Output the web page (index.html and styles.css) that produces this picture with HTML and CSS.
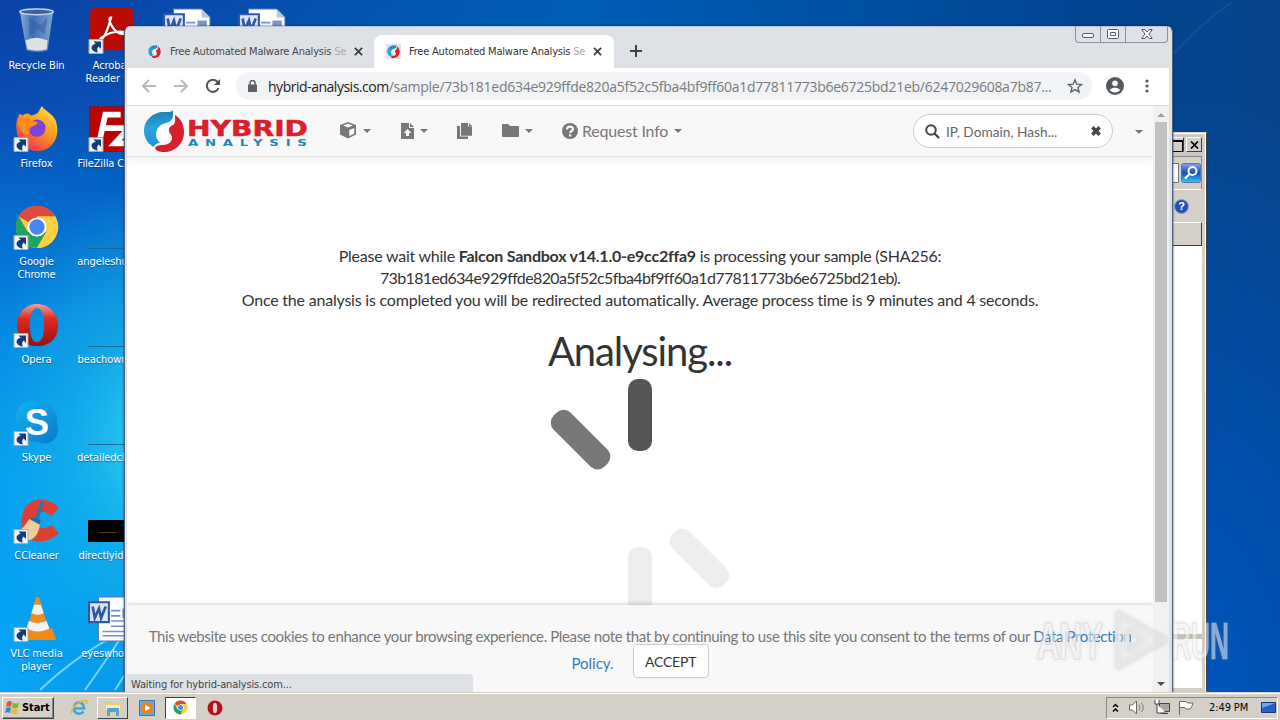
FILE: index.html
```
<!DOCTYPE html>
<html>
<head>
<meta charset="utf-8">
<title>Desktop</title>
<link rel="stylesheet" href="styles.css">
</head>
<body>

<!-- shared icons -->
<svg width="0" height="0" class="defs">
<defs>
<linearGradient id="gFire" x1="1" y1="0" x2="0.3" y2="1"><stop offset="0" stop-color="#fff04a"/><stop offset=".5" stop-color="#ff9a1f"/><stop offset="1" stop-color="#f0305a"/></linearGradient>
<linearGradient id="gOpera" x1="0" y1="0" x2="0" y2="1"><stop offset="0" stop-color="#f4a09a"/><stop offset=".35" stop-color="#e02a20"/><stop offset="1" stop-color="#98100c"/></linearGradient>
<linearGradient id="gSkype" x1="0" y1="0" x2="1" y2="1"><stop offset="0" stop-color="#12b4ea"/><stop offset="1" stop-color="#0a78d0"/></linearGradient>
<linearGradient id="gBin" x1="0" y1="0" x2="1" y2="0"><stop offset="0" stop-color="#a8c4e4"/><stop offset=".4" stop-color="#4a78b8"/><stop offset="1" stop-color="#9cbce0"/></linearGradient>
<linearGradient id="gBlue" x1="0" y1="0" x2="0" y2="1"><stop offset="0" stop-color="#1c7cb0"/><stop offset=".5" stop-color="#28a8e0"/><stop offset="1" stop-color="#1c90cc"/></linearGradient>
<linearGradient id="gFind" x1="0" y1="0" x2="0" y2="1"><stop offset="0" stop-color="#8ba4ee"/><stop offset=".5" stop-color="#1c48c8"/><stop offset="1" stop-color="#30d0e8"/></linearGradient>
</defs>
<symbol id="arrow" viewBox="0 0 15 15"><path fill="#f2f4f6" stroke="#a9a9a9" d="M.5.5h14v14H.5z"/><path fill="#143c7c" d="M5 2.500h7.500V10l-2.300-2.400C8.500 9 8.200 11 9.200 13.500 5 13 1.800 10 3.500 7c.8-1.300 2.200-1.900 3.700-2.300z"/></symbol>
<symbol id="chrome" viewBox="0 0 48 48"><circle cx="24" cy="24" r="22" fill="#fdd044"/><path fill="#de4a3e" d="M24 24 4.900 13A22 22 0 0 1 43.100 13H24z"/><path fill="#22a160" d="M4.900 13A22 22 0 0 0 24 46l10-17-10-5-9.500 5.500z"/><path fill="#fdd044" d="M43.100 13H24l9.500 16.500L24 46A22 22 0 0 0 43.100 13z"/><circle cx="24" cy="24" r="10" fill="#fff"/><circle cx="24" cy="24" r="8" fill="#4a86f0"/></symbol>
<symbol id="opera" viewBox="0 0 48 48"><path fill="url(#gOpera)" fill-rule="evenodd" d="M24 2c12 0 22 9 22 22.500S37 46 24 46 3 37 3 24.500 12 2 24 2zm0 4.500c-5 0-7.500 7-7.500 17.500S19 42 24 42s7.500-7.500 7.500-18S29 6.500 24 6.500z"/></symbol>
<symbol id="swirl" viewBox="0 0 40 42"><path fill="url(#gBlue)" d="M29 0c-1 2-4 2-9 2C9 2 0 10 0 21c0 7 4 13 10 16 0-2 3-4 6-4-3-3-4-6-4-8 0-6 4-11 10-12 4-1 7-4 7-7z"/><path fill="#d8202c" d="M31 5c6 4 9 9 9 17 0 12-9 20-20 20-4 0-8-1-9-4 2-3 5-3 8-3 6 0 9-4 9-7 0-4-3-4-3-8 0-3 2-4 4-5 3-2 2-6 2-10z"/><path fill="#fff" d="M13 23q0-8 8-9 4 0 3 4-2 3 1 7 1 5-6 5l-2-2 1-4-4 1z"/></symbol>
<symbol id="word" viewBox="0 0 46 44"><path fill="#fff" stroke="#5878b8" d="M10 1h27l8 8v34H10z"/><path fill="#b8c8e8" d="M37 1v8h8z"/><path stroke="#7890d0" stroke-width="1.500" d="M22 14h9M22 19h9M22 24h20M22 29h20M14 34h28M14 38h28"/><path fill="#7c94c8" d="M33 12h9v9h-9z"/><path fill="#dce6f8" stroke="#3058a8" stroke-width="2" d="M1 6h19v19H1z"/><path fill="none" stroke="#3058a8" stroke-width="2.600" d="M4.500 10l2 11 4-9 2 9 4.500-11"/></symbol>
</svg>

<div class="desktop">

<svg class="rays" viewBox="0 0 130 100"><path d="M40 98Q80 60 130 36M85 98Q105 70 122 44M115 98Q122 86 130 76"/></svg>
<svg class="streak" viewBox="0 0 60 60"><path d="M2 52Q30 20 60 0"/></svg>

<div class="icons">
	<div class="icon"><svg viewBox="0 0 48 48"><path fill="url(#gBin)" fill-opacity=".8" d="M6 3h35l-6 41q-11 4-22 0z"/><path fill="#dfe0e2" d="M12 34q11-6 23 0l-1 9q-10 3-20 0z"/><path fill="#2c5ca4" d="M16 10l12 8 7-9-3 18-8-5-8 9z" opacity=".5"/><ellipse cx="23.500" cy="4" rx="17.500" ry="3" fill="#38639c" stroke="#c8d4e4" stroke-width="1.500"/></svg><span>Recycle Bin</span></div>
	<div class="icon"><svg viewBox="0 0 48 48"><path fill="url(#gFire)" d="M3 14l3-6 3 2c3-3 6-3 9 0 3-1 6-2 7-3l4-7c3 5 10 7 14 14 6 14 0 32-18 33C8 47 0 30 3 14z"/><circle cx="24" cy="23" r="9" fill="#7c45d8"/><path fill="#ff8d1e" d="M4 17c4-6 10-5 13-2l8 2c-2 4-6 3-8 6-2 4 0 6-3 7-6-1-9-7-10-13z"/></svg><svg class="short"><use href="#arrow"/></svg><span>Firefox</span></div>
	<div class="icon"><svg><use href="#chrome"/></svg><svg class="short"><use href="#arrow"/></svg><span>Google<br>Chrome</span></div>
	<div class="icon"><svg><use href="#opera"/></svg><svg class="short"><use href="#arrow"/></svg><span>Opera</span></div>
	<div class="icon"><svg viewBox="0 0 48 48"><path fill="url(#gSkype)" d="M14 2c5-2 8 1 12 1 13 0 20 9 19 21 2 8 1 16-7 20-6 3-10 0-14 0C10 44 3 36 3 24 0 14 5 4 14 2z"/><text class="skype" x="24" y="37" text-anchor="middle">S</text></svg><svg class="short"><use href="#arrow"/></svg><span>Skype</span></div>
	<div class="icon"><svg viewBox="0 0 48 48"><path fill="#dc4032" d="M47 10C32-5 8 0 8 24s22 27 39 13l-8-9c-8 7-17 3-17-5s9-12 17-4z"/><path fill="#2874b8" d="M28 3l3 2-6 20-4-1z"/><path fill="#1c6cb0" d="M19 20l9 3-2 6-10-5z"/><path fill="#f4cc98" d="M16 22l11 6c-1 8-5 15-11 16L2 36c7-3 10-8 14-14z"/></svg><svg class="short"><use href="#arrow"/></svg><span>CCleaner</span></div>
	<div class="icon"><svg viewBox="0 0 48 48"><path fill="#f08a14" d="M10 34h30l4 12H5z"/><path fill="#f68b1c" d="M23 1h3l11 36q-12 6-24 0z"/><path fill="#f2f2f2" d="M21 9h7l3 9q-6 3-13 0zM15.500 26q9 4 18.500 0l3 8q-12 6-24 0z"/></svg><svg class="short"><use href="#arrow"/></svg><span>VLC media<br>player</span></div>

	<div class="icon"><svg viewBox="0 0 48 48"><rect x="1" width="46" height="44" rx="5" fill="#b80c04"/><path fill="none" stroke="#fff" stroke-width="2.300" d="M23 10c-5 0 3 18 13 17 7-2-9-6-23 4-6 5 3 7 10-21z"/></svg><svg class="short"><use href="#arrow"/></svg><span>Acrobat<br>Reader DC</span></div>
	<div class="icon"><svg viewBox="0 0 48 48"><path fill="#b80404" stroke="#8c0808" stroke-dasharray="2 2" d="M.5.5h47v47H.5z"/><path fill="none" stroke="#fff" stroke-width="6" d="M33 9H17l-7 32M14 23h15M28 23h14L27 39h15"/></svg><svg class="short"><use href="#arrow"/></svg><span>FileZilla Client</span></div>
	<div class="icon"><i class="line"></i><span>angeleshust...</span></div>
	<div class="icon"><i class="line"></i><span>beachowner...</span></div>
	<div class="icon"><i class="line"></i><span>detailedclub...</span></div>
	<div class="icon"><i class="thumb"></i><span>directlyidea...</span></div>
	<div class="icon"><svg><use href="#word"/></svg><span>eyeswhole...</span></div>

	<div class="icon last"><svg><use href="#word"/></svg></div>
	<div class="icon"><svg><use href="#word"/></svg></div>
</div>

<!-- explorer window in the back -->
<div class="explorer">
	<div class="ex-title"><b class="max"></b><b class="cls"><svg viewBox="0 0 9 8"><path d="M1 .5l7 7M8 .5l-7 7"/></svg></b></div>
	<div class="ex-addr"><i></i><svg viewBox="0 0 20 20"><rect x=".5" y=".5" width="19" height="19" rx="2" fill="url(#gFind)" stroke="#5474b8"/><circle cx="11.500" cy="8" r="4" fill="none" stroke="#fff" stroke-width="2"/><path stroke="#fff" stroke-width="2.400" d="M8.500 11L4 15.500"/></svg></div>
	<div class="ex-tools"><em>?</em></div>
	<div class="ex-head"></div>
	<div class="ex-list"></div>
</div>

<!-- browser -->
<div class="browser">
	<div class="tabs">
		<div class="tab">
			<svg class="fav" viewBox="0 0 15 15"><use href="#swirl" x="1" y="1" width="13" height="13"/></svg>
			<p>Free Automated Malware Analysis <span>Se</span></p>
			<svg class="x" viewBox="0 0 10 10"><path d="M1 1l8 8M9 1l-8 8"/></svg>
		</div>
		<div class="tab on">
			<svg class="fav" viewBox="0 0 15 15"><use href="#swirl" x="1" y="1" width="13" height="13"/></svg>
			<p>Free Automated Malware Analysis <span>Se</span></p>
			<svg class="x" viewBox="0 0 10 10"><path d="M1 1l8 8M9 1l-8 8"/></svg>
		</div>
		<svg class="plus" viewBox="0 0 12 12"><path d="M6 0v12M0 6h12"/></svg>
		<div class="winbtns">
			<b><svg viewBox="0 0 12 6"><rect x=".5" y=".5" width="11" height="4" rx="1.500"/></svg></b>
			<b><svg viewBox="0 0 12 10"><rect x=".5" y=".5" width="11" height="9" rx="1"/><path d="M3.500 3.500h5v3h-5z"/></svg></b>
			<b><svg viewBox="0 0 12 10"><path d="M.8.500h3L6 3 8.200.500h3L8 5l3.200 4.500h-3L6 7 3.800 9.500h-3L4 5z"/></svg></b>
		</div>
	</div>

	<div class="toolbar">
		<svg class="nav off" viewBox="0 0 14 14"><path d="M14 7H1M7 1L1 7l6 6"/></svg>
		<svg class="nav off" viewBox="0 0 14 14"><path d="M0 7h13M7 1l6 6-6 6"/></svg>
		<svg class="nav" viewBox="0 0 14 14"><path d="M12.500 9A6 6 0 1 1 11.500 3L13 5"/><path class="fill" d="M14 0v6H8z"/></svg>
		<div class="omni">
			<svg class="lock" viewBox="0 0 9 12"><path fill="#5f6368" d="M0 4.500h9V12H0z"/><path fill="none" stroke="#5f6368" stroke-width="1.500" d="M2 5V3a2.500 2.500 0 0 1 5 0v2"/></svg>
			<p><b>hybrid-analysis.com</b><span>/sample/73b181ed634e929ffde820a5f52c5fba4bf9ff60a1d77811773b6e6725bd21eb/6247029608a7b87...</span></p>
			<svg class="star" viewBox="0 0 16 16"><path d="M8 1.800l1.800 4.400 4.700.3-3.600 3 1.200 4.600L8 11.600l-4.100 2.500 1.200-4.600-3.600-3 4.700-.3z"/></svg>
		</div>
		<svg class="user" viewBox="0 0 18 18"><circle cx="9" cy="9" r="9" fill="#54585d"/><circle cx="9" cy="6.300" r="2.800" fill="#fff"/><path fill="#fff" d="M3.500 13q5.500-5 11 0-5.500 5-11 0z"/></svg>
		<svg class="dots" viewBox="0 0 4 14"><circle cx="2" cy="2" r="1.600"/><circle cx="2" cy="7" r="1.600"/><circle cx="2" cy="12" r="1.600"/></svg>
	</div>

	<div class="view">
	<div class="page">
		<div class="navbar">
			<svg class="logo" viewBox="0 0 166 44">
				<use href="#swirl" width="40" height="42" x="0" y="1"/>
				<text class="hy" x="43" y="27" textLength="121" lengthAdjust="spacingAndGlyphs">HYBRID</text>
				<text class="an" x="31.400" y="37.500" textLength="85" lengthAdjust="spacing" transform="scale(1.4 1)">ANALYSIS</text>
			</svg>
			<div class="item box"><svg width="18" height="17" viewBox="0 0 18 17"><path d="M9 0l8 3v9.500l-8 4-8-4V3z"/><path fill="#f8f8f8" d="M9 1.800l5 1.800-5 1.900-5-1.900zM10.300 8l5-2v5.600l-5 2.700z"/></svg><i class="caret"></i></div>
			<div class="item up"><svg width="13" height="16" viewBox="0 0 13 16"><path d="M0 0h8v5h5v11H0z"/><path d="M9 0l4 4H9z"/><path fill="#f8f8f8" d="M6.500 6l4 4H8v3H5v-3H2.500z"/></svg><i class="caret"></i></div>
			<div class="item copy"><svg width="15" height="16" viewBox="0 0 15 16"><path d="M4 0h7v4h4v12H4z" transform="scale(1 .8)"/><path d="M12 0l3 3h-3zM0 3h3v10.500h8V16H0z"/></svg></div>
			<div class="item dir"><svg width="17" height="13" viewBox="0 0 17 13"><path d="M0 1q0-1 1-1h5l2 2h8q1 0 1 1v9q0 1-1 1H1q-1 0-1-1z"/></svg><i class="caret"></i></div>
			<div class="item req"><svg width="16" height="16" viewBox="0 0 16 16"><circle cx="8" cy="8" r="8"/><path fill="none" stroke="#f8f8f8" stroke-width="2.200" d="M5 6.500C5 2.500 11 2.800 11 6c0 2-2.800 2-2.800 4"/><path fill="#f8f8f8" d="M7 11.300h2.300v2.200H7z"/></svg><span>Request Info</span><i class="caret"></i></div>
			<div class="search">
				<svg width="15" height="15" viewBox="0 0 15 15"><circle cx="6" cy="6" r="4.800" fill="none" stroke="#444" stroke-width="2"/><path stroke="#444" stroke-width="2.400" d="M9.500 9.500l4.500 4.500"/></svg>
				<span>IP, Domain, Hash...</span>
				<svg width="10" height="10" viewBox="0 0 10 10"><path stroke="#444" stroke-width="3.400" d="M1.300 1.300l7.400 7.400M8.700 1.300L1.300 8.700"/></svg>
			</div>
			<i class="caret end"></i>
		</div>

		<div class="msg">
			<p class="l1">Please wait while <b>Falcon Sandbox v14.1.0-e9cc2ffa9</b> is processing your sample (SHA256:</p>
			<p class="l2">73b181ed634e929ffde820a5f52c5fba4bf9ff60a1d77811773b6e6725bd21eb).</p>
			<p class="l3">Once the analysis is completed you will be redirected automatically. Average process time is 9 minutes and 4 seconds.</p>
			<h1>Analysing...</h1>
			<svg class="spinner" width="240" height="240" viewBox="-120 -120 240 240">
				<rect x="-12" y="-120" width="24" height="72" rx="10" fill="#555"/>
				<rect x="-12" y="-120" width="24" height="72" rx="10" fill="#777" transform="rotate(-45)"/>
				<rect x="-12" y="-120" width="24" height="72" rx="10" fill="#ededed" transform="rotate(135)"/>
				<rect x="-12" y="-120" width="24" height="72" rx="10" fill="#ededed" transform="rotate(180)"/>
			</svg>
		</div>

		<div class="cookie">
			<p class="c1">This website uses cookies to enhance your browsing experience. Please note that by continuing to use this site you consent to the terms of our <a>Data Protection</a></p>
			<p><a>Policy.</a><button>ACCEPT</button></p>
		</div>
		<div class="status"><span>Waiting for hybrid-analysis.com...</span></div>
	</div>
	<div class="scroll"><i class="su"></i><i class="bar"></i><i class="sd"></i></div>
	</div>
</div>

<div class="mark">
	<svg viewBox="0 0 200 70">
		<text x="3" y="54" textLength="66" lengthAdjust="spacingAndGlyphs">ANY</text>
		<path d="M84 8l46 27-46 27zM93 24v22l18-11z"/>
		<text x="138" y="54" textLength="57" lengthAdjust="spacingAndGlyphs">RUN</text>
	</svg>
</div>

<div class="taskbar">
	<div class="start"><svg width="15" height="15" viewBox="0 0 15 15"><path fill="#e4572a" d="M2 2q3-2 5 0L6 7Q3 5.500 1 7z"/><path fill="#7db83c" d="M8 2.500q3 2 6 0l-1 5q-3 1.500-6 0z"/><path fill="#3c84d8" d="M1 8q3-1.500 5 0l-1 5q-3-1.500-5 0z"/><path fill="#f8b820" d="M7 8.500q3 1.500 6 0l-1 5q-3 1.500-6 0z"/></svg>Start</div>
	<div class="tb ie"><svg width="18" height="18" viewBox="0 0 18 18"><path fill="none" stroke="#3ca4e0" stroke-width="2.600" d="M4 9.500h10C14 1.500 4 1.500 4 9.500c0 6 7 6.500 9.500 3"/><path fill="none" stroke="#e8b83c" stroke-width="1.500" d="M2 15C-1 13 6 3 15 1.500c3 0 2 2 1 3"/></svg></div>
	<div class="tb up"><svg width="18" height="16" viewBox="0 0 18 16"><path fill="#e8cc78" d="M1 2q0-1 1-1h4l1 2h9q1 0 1 1v9H1z"/><path fill="#f8ecb0" d="M2 5h14v6H2z"/><path fill="#4ca4dc" d="M3 9q0-1 1-1h10q1 0 1 1v7h-3v-4H6v4H3z"/></svg></div>
	<div class="tb"><svg width="16" height="16" viewBox="0 0 16 16"><path fill="#68a8d8" stroke="#3878b0" d="M.5.500h15v15H.500z"/><circle cx="8" cy="8" r="6" fill="#f08018"/><path fill="#fff" d="M6 4.500l5.500 3.500L6 11.500z"/></svg></div>
	<div class="tb down"><svg width="15" height="15"><use href="#chrome"/></svg></div>
	<div class="tb"><svg width="16" height="16" viewBox="0 0 16 16"><circle cx="8" cy="8" r="7.500" fill="#b81018"/><ellipse cx="8" cy="8" rx="2.200" ry="5.300" fill="#e8d0d0"/></svg></div>
	<div class="tray">
		<svg width="7" height="10" viewBox="0 0 7 10"><path fill="none" stroke="#000" stroke-width="1.500" d="M1 4l2.500-2.500L6 4M1 8.500L3.500 6 6 8.500"/></svg>
		<svg width="17" height="15" viewBox="0 0 17 15"><path fill="#fff" stroke="#666" d="M.5 5h3l4-4v13l-4-4h-3z"/><path fill="none" stroke="#777" d="M10 4.500q2 3 0 6M12.500 3q3.500 4.500 0 9"/></svg>
		<svg width="16" height="15" viewBox="0 0 16 15"><path fill="#aaa" stroke="#444" d="M5.500 3.500h10v8h-10z"/><path fill="#fff" stroke="#444" d="M1 0v4h4V0M3 4v9h9M7 13.500h7"/></svg>
		<svg width="17" height="14" viewBox="0 0 17 14"><path fill="#fff" stroke="#666" d="M1.500 14V.500h6q1 2 7.500 1.500-1 4-3 6H8L7 6.500H1.500"/></svg>
		<span>2:49 PM</span>
		<svg width="15" height="12" viewBox="0 0 15 12"><path fill="#2c60c0" stroke="#14367c" d="M.5.500h14v10H.500z"/><path fill="#74a8ec" d="M1 1h13L1 6z"/><path stroke="#cdd" d="M1 11.500h13"/></svg>
	</div>
</div>

</div>
</body>
</html>
```
FILE: styles.css
```
*{box-sizing:border-box;}
body{margin:0;overflow:hidden;font-family:"DejaVu Sans Condensed","DejaVu Sans",sans-serif;font-size:11px;}
p,h1{margin:0;}
svg{display:block;flex:none;}
.defs{position:absolute;}

.desktop{position:relative;width:1280px;height:720px;overflow:hidden;display:flex;flex-direction:column;justify-content:flex-end;
background:
radial-gradient(ellipse 300px 620px at 1190px 720px,rgba(0,86,190,1),rgba(0,80,178,.8) 45%,rgba(0,70,150,0)),
radial-gradient(ellipse 200px 260px at 170px 440px,rgba(50,215,245,.95),rgba(30,195,240,.5) 50%,rgba(20,170,240,0)),
linear-gradient(90deg,rgba(0,96,184,0) 0,rgba(0,96,184,.9) 45%,rgba(0,68,144,1) 85%,#064488 100%),
linear-gradient(180deg,#0a42a6 0,#0a4cb2 100px,#0468cc 200px,#0484e0 320px,#039cf0 480px,#08a8f8 720px);}
.rays{position:absolute;left:0;top:592px;width:130px;height:100px;}
.rays path{fill:none;stroke:#9be6ff;stroke-width:2;opacity:.75;}
.streak{position:absolute;left:1172px;top:2px;width:60px;height:60px;}
.streak path{fill:none;stroke:#3c74ac;stroke-width:2;opacity:.25;}

/* desktop icons, 7 in a column */
.icons{position:absolute;left:-1px;top:8px;display:grid;grid-template-rows:repeat(7,98px);grid-auto-columns:75px;grid-auto-flow:column;}
.icon{position:relative;display:flex;flex-direction:column;align-items:center;color:#fff;text-align:center;line-height:13px;white-space:nowrap;}
.icon>svg{width:48px;height:46px;margin-bottom:5px;}
.icon>.short{position:absolute;left:14px;top:31px;width:16px;height:15px;margin:0;}
.icon span{text-shadow:0 1px 1px rgba(0,30,80,.5);letter-spacing:-.1px;}
.icon .line{width:48px;height:41px;border-bottom:1px solid #176a98;margin-bottom:6px;margin-top:4px;}
.icon .thumb{width:48px;height:22px;background:#000;margin:22px 0 7px;}
.icon .thumb:after{content:"";display:block;width:17px;height:1px;margin:12px 0 0 11px;background:#54400c;}
.icon.last{grid-row:1;grid-column:3;}
.last+.icon{grid-row:1;grid-column:4;}
.skype{font:bold 38px "Liberation Sans",sans-serif;fill:#fff;}

.explorer{position:absolute;left:1000px;top:132px;width:207px;height:560px;background:#d4d0c8;border:1px solid #d4d0c8;border-right-color:#404040;box-shadow:inset -1px 1px #fff;padding:2px 4px 3px 0;display:flex;flex-direction:column;}
.ex-title{display:flex;justify-content:flex-end;height:21px;padding:2px 0;background:#c8c8c8;}
.ex-title b{width:16px;height:15px;margin-left:2px;background:#d4d0c8;border:1px solid;border-color:#fff #404040 #404040 #fff;}
.ex-title .max:before{content:"";display:block;width:10px;height:9px;margin:2px;border:1px solid #000;border-top-width:2px;}
.ex-title svg{width:9px;height:8px;margin:3px;stroke:#000;stroke-width:1.700;}
.ex-addr{display:flex;align-items:center;justify-content:flex-end;gap:2px;height:34px;border:1px solid #888;border-bottom-color:#fff;}
.ex-addr i{width:60px;height:20px;background:#fff;border:1px solid #777;}
.ex-addr svg{width:20px;height:20px;}
.ex-tools{height:32px;padding:9px 13px;text-align:right;}
.ex-tools em{display:inline-block;width:15px;height:15px;border-radius:8px;background:#2450b0;border:1px solid #8ca4d8;color:#fff;font:bold 11px/13px "Liberation Sans",sans-serif;text-align:center;}
.ex-head{height:24px;border:1px solid #fff;border-right-color:#404040;border-bottom-color:#404040;}
.ex-list{flex:1;background:linear-gradient(#fff 388px,#c8c5bc 388px,#c8c5bc 393px,#fff 393px);}

.browser{position:absolute;left:124px;top:26px;width:1049px;height:666px;background:#dee1e6;border:1px solid #50647c;border-top-color:#b8c4d4;border-bottom:0;border-radius:6px 6px 0 0;padding:0 3px 0 2px;display:flex;flex-direction:column;box-shadow:0 0 2px #123;}
.tabs{position:relative;display:flex;height:41px;padding:8px 0 0 8px;}
.tab{display:flex;align-items:center;width:239px;height:33px;padding:0 11px 0 12px;color:#45494d;}
.tab.on{width:240px;padding-right:12px;background:#fff;border-radius:8px 8px 0 0;color:#333;}
.fav{width:15px;height:15px;margin-right:8px;background:#e2e0ea;}
.tab p{flex:1;white-space:nowrap;overflow:hidden;letter-spacing:-.2px;}
.tab p span{color:#aaa;}
.tab .x{width:9px;height:9px;margin-left:8px;stroke:#3c4043;stroke-width:2;}
.plus{width:12px;height:12px;margin:10px 0 0 16px;stroke:#3c4043;stroke-width:2;}
.winbtns{position:absolute;right:1px;top:-1px;display:flex;border:1px solid #8a929c;border-top:0;border-radius:0 0 4px 4px;}
.winbtns b{width:25px;height:16px;display:flex;align-items:center;justify-content:center;border-right:1px solid #8a929c;}
.winbtns b:last-child{width:41px;border:0;}
.winbtns svg{width:12px;height:10px;fill:#fff;stroke:#555b66;}
.winbtns b:first-child svg{height:6px;margin-top:4px;}

.toolbar{display:flex;align-items:center;height:38px;background:#fff;border-bottom:1px solid #d8dadd;padding:0 15px 1px;}
.nav{width:14px;height:14px;margin-right:18px;fill:none;stroke:#505458;stroke-width:2;}
.nav.off{stroke:#b8babd;}
.nav .fill{fill:#505458;stroke:none;}
.omni{display:flex;align-items:center;width:856px;height:28px;margin-left:-2px;border-radius:14px;background:#f1f3f4;padding:0 9px 0 12px;}
.lock{width:9px;height:12px;margin-right:11px;}
.omni p{flex:1;white-space:nowrap;font:14px "Open Sans","Noto Sans",sans-serif;color:#777b80;}
.omni b{font-weight:normal;color:#222;letter-spacing:-.48px;}
.omni p span{letter-spacing:-.26px;}
.star{width:16px;height:16px;fill:none;stroke:#5f6368;stroke-width:1.400;}
.user{width:18px;height:18px;margin-left:14px;}
.dots{width:4px;height:14px;margin-left:21px;fill:#54585d;}

.view{flex:1;display:flex;min-height:0;}
.page{position:relative;flex:1;background:#fff;overflow:hidden;font-family:Lato,sans-serif;color:#333;}
.scroll{position:relative;width:16px;display:flex;flex-direction:column;align-items:center;background:#f1f1f1;}
.bar{flex:1;width:12px;background:#c1c1c1;margin-bottom:90px;}
.su{border:4px solid transparent;border-top:0;border-bottom:4px solid #a0a0a0;margin:7px 0 5px;}
.sd{position:absolute;bottom:6px;border:4px solid transparent;border-bottom:0;border-top-color:#505050;}

.navbar{position:relative;display:flex;align-items:center;height:51px;background:#f8f8f8;border-bottom:1px solid #e4e4e4;box-shadow:0 2px 8px rgba(0,0,0,.08);padding:0 0 1px 17px;color:#777;}
.logo{width:166px;height:44px;}
.hy{font:bold 22px "DejaVu Sans",sans-serif;fill:#d8202c;stroke:#d8202c;stroke-width:.5;}
.an{font:bold 9.500px "DejaVu Sans",sans-serif;fill:#1c88b4;}
.item{display:flex;align-items:center;fill:#777;font-size:16px;}
.caret{border:4px solid transparent;border-top-color:#777;border-bottom:0;margin-left:6px;}
.box{margin-left:29px;}
.up{margin-left:30px;}
.copy{margin-left:29px;}
.dir{margin-left:30px;}
.req{margin-left:29px;}
.req span{margin-left:4px;letter-spacing:-.2px;}
.search{position:absolute;left:786px;top:8px;width:200px;height:34px;display:flex;align-items:center;background:#fff;border:1px solid #ccc;border-radius:17px;padding:0 11px;font-size:13.700px;color:#666;}
.search span{flex:1;margin-left:6px;}
.end{position:absolute;left:1002px;top:24px;}

.msg{padding-top:88px;text-align:center;font-size:16px;line-height:22px;}
.msg p{white-space:nowrap;}
.l1{letter-spacing:-.24px;}
.l2{letter-spacing:-.64px;}
.l3{letter-spacing:-.21px;}
.msg h1{font-size:40px;line-height:44px;font-weight:normal;letter-spacing:-1.100px;margin-top:18px;}
.spinner{margin:6px auto 0;}

.cookie{position:absolute;left:0;right:0;bottom:0;height:87px;background:#f8f8f8;box-shadow:0 -1px 4px rgba(0,0,0,.2);color:#777;font-size:15px;line-height:28px;text-align:center;padding-top:17px;white-space:nowrap;}
.cookie p{height:27px;}
.c1{letter-spacing:-.38px;}
.cookie a{color:#337ab7;}
.cookie button{height:34px;width:76px;margin:-5px 0 0 19px;padding:0;border:1px solid #ccc;border-radius:4px;background:#fff;color:#333;font:14px Lato,sans-serif;letter-spacing:-.2px;vertical-align:top;}
.status{position:absolute;left:0;bottom:0;width:346px;height:18px;background:#dee1e6;border-radius:0 4px 0 0;padding-left:4px;font:11px/21px "DejaVu Sans Condensed","DejaVu Sans",sans-serif;letter-spacing:-.15px;color:#444;}

.mark{position:absolute;left:1034px;top:605px;width:200px;height:70px;}
.mark svg{fill:rgba(255,255,255,.5);stroke:rgba(190,190,190,.45);filter:drop-shadow(0 0 2px rgba(120,120,120,.35));}
.mark path{fill:rgba(255,255,255,.3);stroke:rgba(232,232,232,.85);stroke-width:5;stroke-linejoin:round;fill-rule:evenodd;}
.mark text{font:bold 51px "Liberation Sans Narrow","Liberation Sans",sans-serif;}

.taskbar{position:relative;display:flex;align-items:center;height:28px;background:#d4d0c8;border-top:1px solid #d4d0c8;box-shadow:inset 0 1px #fff;padding:3px 2px 1px;}
.start{display:flex;align-items:center;gap:2px;width:52px;height:22px;padding-left:2px;border:1px solid;border-color:#fff #404040 #404040 #fff;box-shadow:inset -1px -1px #888;font-weight:bold;letter-spacing:-.1px;}
.tb{display:flex;align-items:center;justify-content:center;width:31px;height:22px;margin-left:3px;}
.ie{margin-left:9px;}
.tb.up{border:1px solid;border-color:#fff #404040 #404040 #fff;}
.tb.down{background:#fff;border:1px solid;border-color:#404040 #fff #fff #404040;}
.tray{display:flex;align-items:center;width:172px;height:22px;margin-left:auto;border:1px solid;border-color:#888 #fff #fff #888;padding:0 1px 0 5px;gap:8px;}
.tray svg:first-child{margin-right:2px;}
.tray span{margin-left:6px;white-space:nowrap;flex:1;letter-spacing:-.1px;}
```
